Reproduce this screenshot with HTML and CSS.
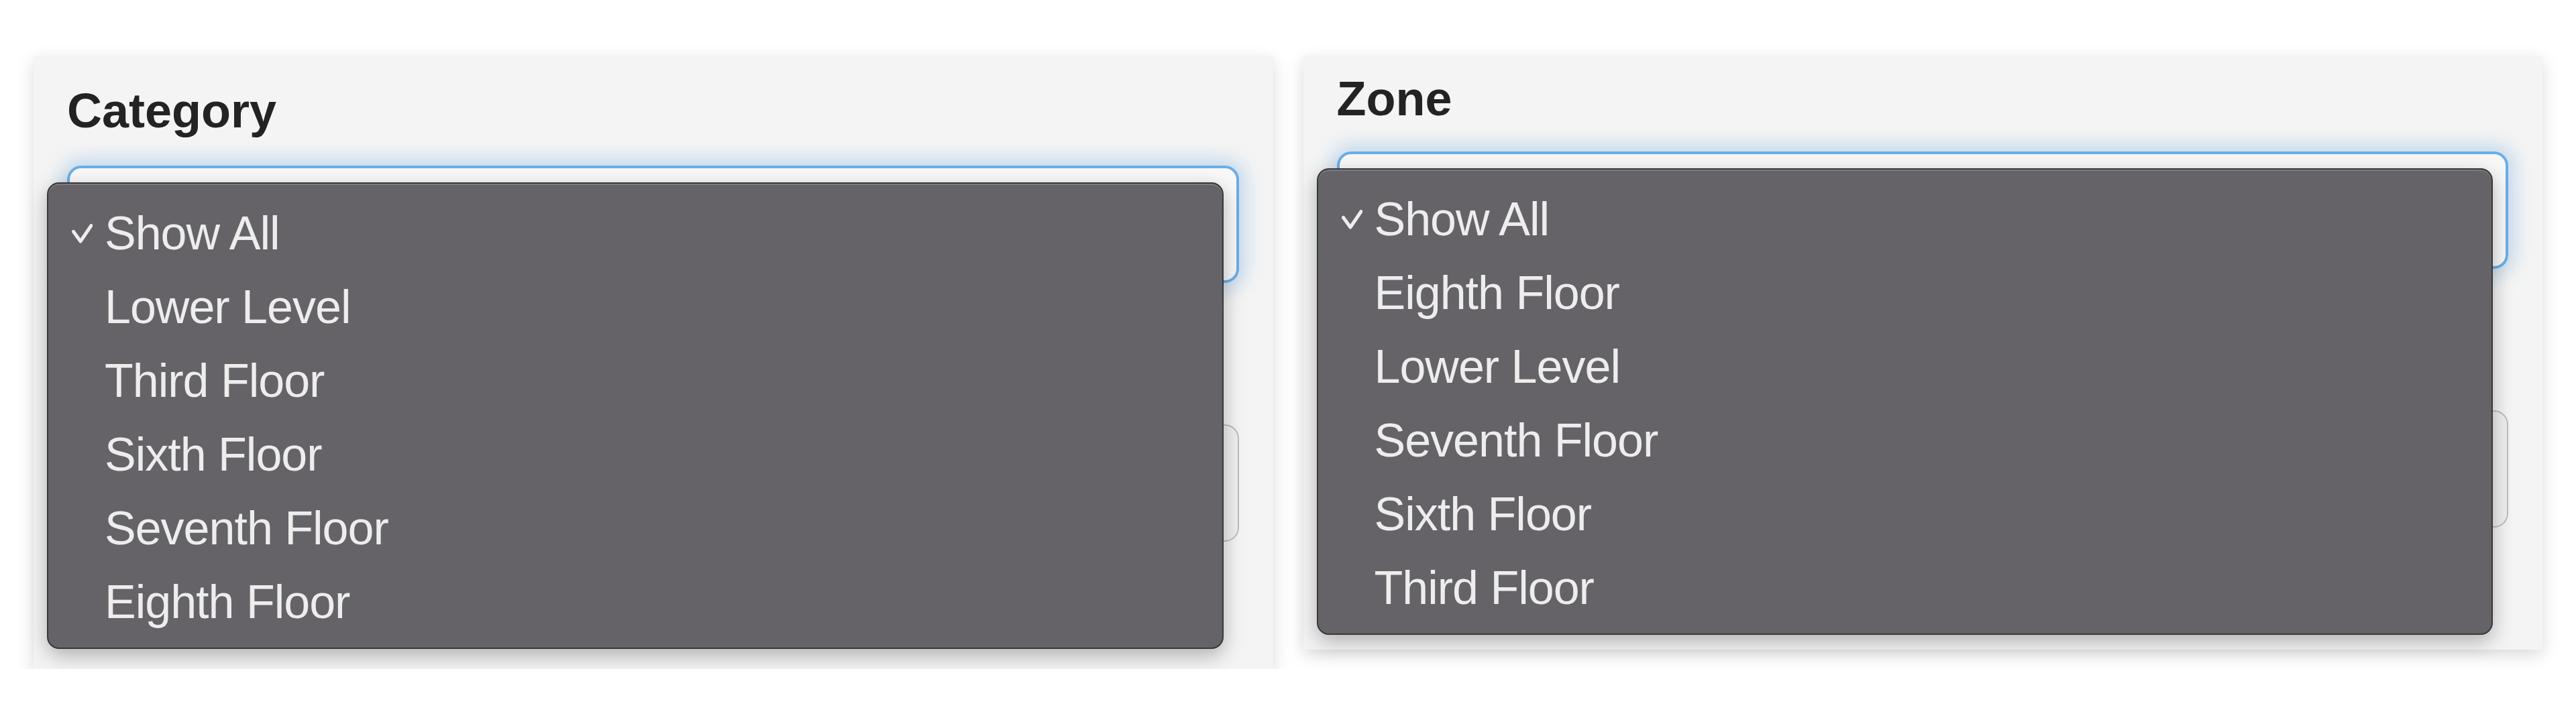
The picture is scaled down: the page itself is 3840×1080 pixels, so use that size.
FILE: index.html
```html
<!DOCTYPE html>
<html lang="en">
<head>
    <meta charset="UTF-8">
    <meta name="viewport" content="width=device-width, initial-scale=1.0">
    <title>Filters</title>
    <link rel="stylesheet" href="styles.css">
</head>
<body>
    <div class="filters">
        <div class="card card-category">
            <h2 class="label">Category</h2>
            <div class="field">
                <div class="select focused"></div>
                <ul class="menu">
                    <li class="checked">
                        <span class="tick"><svg viewBox="0 0 31 29" width="31" height="29"><polyline points="2.5,11.5 13,26 29,2.5"/></svg></span>
                        <span>Show All</span>
                    </li>
                    <li><span class="tick"></span><span>Lower Level</span></li>
                    <li><span class="tick"></span><span>Third Floor</span></li>
                    <li><span class="tick"></span><span>Sixth Floor</span></li>
                    <li><span class="tick"></span><span>Seventh Floor</span></li>
                    <li><span class="tick"></span><span>Eighth Floor</span></li>
                </ul>
            </div>
            <div class="select"></div>
        </div>

        <div class="card card-zone">
            <h2 class="label">Zone</h2>
            <div class="field">
                <div class="select focused"></div>
                <ul class="menu">
                    <li class="checked">
                        <span class="tick"><svg viewBox="0 0 31 29" width="31" height="29"><polyline points="2.5,11.5 13,26 29,2.5"/></svg></span>
                        <span>Show All</span>
                    </li>
                    <li><span class="tick"></span><span>Eighth Floor</span></li>
                    <li><span class="tick"></span><span>Lower Level</span></li>
                    <li><span class="tick"></span><span>Seventh Floor</span></li>
                    <li><span class="tick"></span><span>Sixth Floor</span></li>
                    <li><span class="tick"></span><span>Third Floor</span></li>
                </ul>
            </div>
            <div class="select"></div>
        </div>
    </div>
</body>
</html>
```

FILE: styles.css
```css
html,body{
    margin: 0;
    background: #ffffff;
}
.filters{
    display: flex;
    align-items: flex-start;
    gap: 45px;
    padding: 83px 50px 0 50px;
}
.card{
    flex: 1;
    background-color: #f4f4f4;
    padding: 46px 51px 190px 50px;
    box-shadow: 0 8px 24px rgba(0, 0, 0, 0.15);
}
.card-zone{
    padding-top: 28px;
    padding-bottom: 182px;
}
.label{
    margin: 0 0 46px 0;
    font-family: "Liberation Sans", Arial, sans-serif;
    font-weight: bold;
    font-size: 72px;
    line-height: 72px;
    color: #232323;
}
.card-zone .label{
    margin-bottom: 43px;
}
.field{
    position: relative;
    margin-bottom: 211px;
}
.select{
    box-sizing: border-box;
    height: 175px;
    border: 2px solid #bcbcbc;
    border-radius: 21px;
    background-color: #efefef;
}
.select.focused{
    border: 4px solid #6aaee6;
    background-color: #f8f8f8;
    box-shadow: 0 0 26px 10px rgba(125, 178, 226, 0.4);
}

/* native popup over the select */
.menu{
    position: absolute;
    top: 25px;
    left: -30px;
    right: 23px;
    margin: 0;
    padding: 19px 0 13px 0;
    list-style: none;
    background-color: #656368;
    border: 2px solid #38373a;
    border-radius: 18px;
    box-shadow: inset 0 2px 0 rgba(255, 255, 255, 0.16), 0 10px 30px rgba(0, 0, 0, 0.28);
    font-family: "Liberation Sans", Arial, sans-serif;
    font-size: 70px;
    letter-spacing: -1px;
    color: #ededed;
}
.menu li{
    display: flex;
    align-items: center;
    height: 110px;
    line-height: 110px;
}
.menu .tick{
    display: flex;
    align-items: center;
    width: 49px;
    padding-left: 35px;
}
.menu .tick svg{
    fill: none;
    stroke: #ededed;
    stroke-width: 5;
    stroke-linecap: round;
    stroke-linejoin: round;
}
```
